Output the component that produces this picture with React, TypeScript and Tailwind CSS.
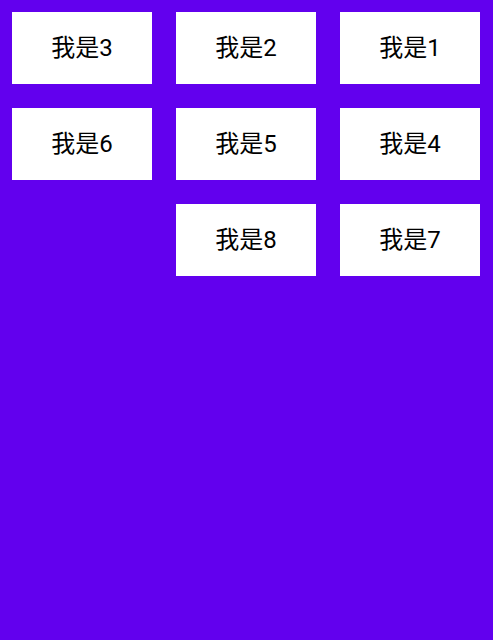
export default function App() {
  const items = [1, 2, 3, 4, 5, 6, 7, 8];
  return (
    <div className="min-h-screen bg-[#6200EE] pt-3 pl-3">
      <div className="w-[468px] flex flex-row-reverse flex-wrap gap-6">
        {items.map((n) => (
          <div
            key={n}
            className="w-[140px] h-[72px] bg-white flex items-center justify-center text-[24px] text-black"
            style={{ fontFamily: 'Roboto, "Noto Sans CJK SC", sans-serif' }}
          >
            我是{n}
          </div>
        ))}
      </div>
    </div>
  );
}
